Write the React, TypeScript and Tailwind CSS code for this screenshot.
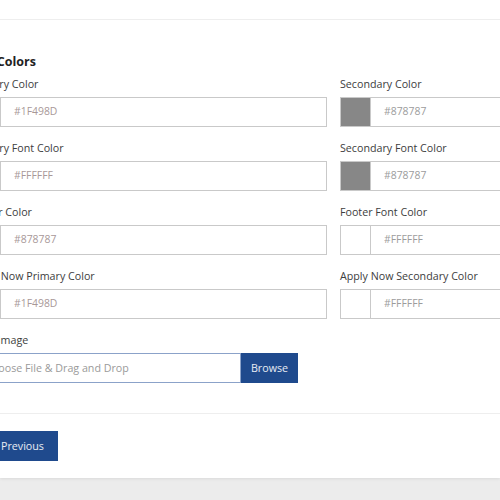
import { ChevronLeft } from 'lucide-react';

const leftFields = [
    { label: 'Primary Color', value: '#1F498D' },
    { label: 'Primary Font Color', value: '#FFFFFF' },
    { label: 'Footer Color', value: '#878787' },
    { label: 'Apply Now Primary Color', value: '#1F498D' },
];

const rightFields = [
    { label: 'Secondary Color', value: '#878787' },
    { label: 'Secondary Font Color', value: '#878787' },
    { label: 'Footer Font Color', value: '#FFFFFF' },
    { label: 'Apply Now Secondary Color', value: '#FFFFFF' },
];

function ColorField({ label, value, tone }: { label: string; value: string; tone: string }) {
    return (
        <div className="flex flex-col">
            <label className="mb-[4px] text-[10.7px] leading-[18px] text-[#3d3d3d]">{label}</label>
            <div className="flex h-[30px] border border-[#c9c9c9]">
                <div className="w-[30px] shrink-0 border-r border-[#c9c9c9]" style={{ background: value }} />
                <input
                    readOnly
                    value={value}
                    className={`min-w-0 flex-1 bg-white px-[13px] text-[10.4px] outline-none ${tone}`}
                />
            </div>
        </div>
    );
}

export default function App() {
    return (
        <div
            className="min-h-screen overflow-hidden bg-[#ececec]"
            style={{ fontFamily: '"Open Sans", "Noto Sans", sans-serif' }}
        >
            <div className="bg-white shadow-[0_1px_3px_rgba(0,0,0,0.08)]">
                {/* Header strip */}
                <div className="h-[20px] border-b border-[#eeeeee]" />

                {/* Body */}
                <div className="-ml-[30px] w-[727px] pt-[32px] pb-[30px] border-b border-[#eeeeee]">
                    <h3 className="mb-[3px] text-[12.5px] font-bold leading-[20px] text-[#222]">Site Colors</h3>
                    <div className="grid grid-cols-[357px_357px] gap-x-[13px] gap-y-[12px]">
                        {leftFields.map((f, i) => (
                            <>
                                <ColorField key={f.label} label={f.label} value={f.value} tone="text-[#a89898]" />
                                <ColorField key={rightFields[i].label} label={rightFields[i].label} value={rightFields[i].value} tone="text-[#9c9c9c]" />
                            </>
                        ))}
                        <div className="flex flex-col">
                            <label className="mb-[4px] text-[10.7px] leading-[18px] text-[#3d3d3d]">Main Image</label>
                            <div className="flex h-[30px]">
                                <div className="flex w-[271px] items-center border border-[#8ba2c9] px-[14px] text-[10.7px] text-[#9a9a9a]">
                                    Choose File &amp; Drag and Drop
                                </div>
                                <button className="w-[57px] bg-[#1f4a8d] text-[10.7px] text-white/90">Browse</button>
                            </div>
                        </div>
                    </div>
                </div>

                {/* Footer */}
                <div className="-ml-[30px] pt-[17px] pb-[17px]">
                    <button className="flex h-[30px] items-center gap-[5px] bg-[#1f4a8d] px-[14px] text-[10.7px] text-white/90">
                        <ChevronLeft size={12} />
                        Previous
                    </button>
                </div>
            </div>
        </div>
    );
}
